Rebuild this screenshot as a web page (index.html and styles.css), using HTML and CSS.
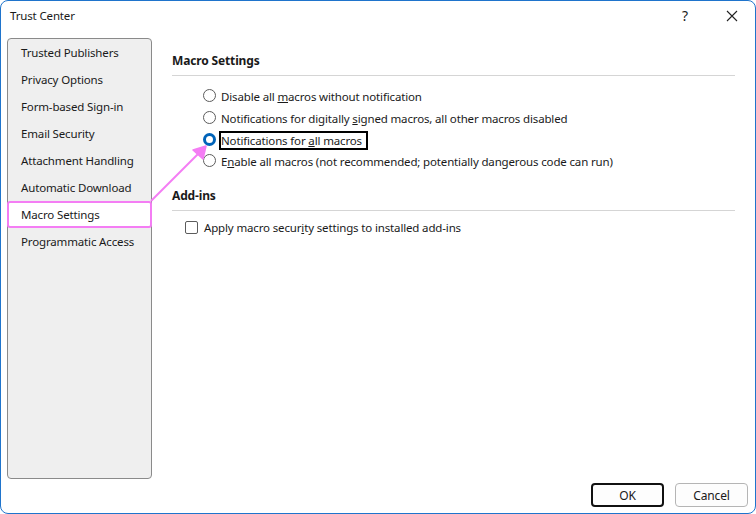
FILE: index.html
```html
<!DOCTYPE html>
<html lang="en">
<head>
    <meta charset="UTF-8">
    <title>Trust Center</title>
    <link rel="stylesheet" href="styles.css">
</head>
<body>

    <div class="window">
        <div class="title-bar">
            <span class="title">Trust Center</span>
            <span class="title-btn help">?</span>
            <span class="title-btn close">
                <svg width="12" height="12" viewBox="0 0 12 12"><path d="M1 1 L11 11 M11 1 L1 11" stroke="#222" stroke-width="1.1" fill="none"/></svg>
            </span>
        </div>

        <div class="main">
            <ul class="sidebar">
                <li>Trusted Publishers</li>
                <li>Privacy Options</li>
                <li>Form-based Sign-in</li>
                <li>Email Security</li>
                <li>Attachment Handling</li>
                <li>Automatic Download</li>
                <li class="active">Macro Settings</li>
                <li>Programmatic Access</li>
            </ul>

            <div class="content">
                <h2 class="section-title">Macro Settings</h2>
                <div class="options">
                    <div class="option"><span class="radio"></span><span>Disable all <u>m</u>acros without notification</span></div>
                    <div class="option"><span class="radio"></span><span>Notifications for digitally <u>s</u>igned macros, all other macros disabled</span></div>
                    <div class="option"><span class="radio checked"></span><span class="focus">Notifications for <u>a</u>ll macros</span></div>
                    <div class="option"><span class="radio"></span><span>E<u>n</u>able all macros (not recommended; potentially dangerous code can run)</span></div>
                </div>

                <h2 class="section-title">Add-ins</h2>
                <div class="check-row"><span class="checkbox"></span><span>Apply macro secur<u>i</u>ty settings to installed add-ins</span></div>
            </div>
        </div>

        <div class="footer">
            <button class="btn default">OK</button>
            <button class="btn">Cancel</button>
        </div>

        <!-- callout arrow -->
        <svg class="callout" width="756" height="514" viewBox="0 0 756 514">
            <path d="M151 201 L205 147" stroke="#f47df4" stroke-width="2" fill="none"/>
            <path d="M193 150 L206 146 L203 159 Z" fill="#f47df4" stroke="#f47df4" stroke-width="1.5" stroke-linejoin="round"/>
        </svg>
    </div>

</body>
</html>
```

FILE: styles.css
```css
* {
    margin: 0;
    padding: 0;
    box-sizing: border-box;
}

body {
    font-family: 'Noto Sans', 'Open Sans', sans-serif;
    font-size: 11.5px;
    letter-spacing: -0.15px;
    color: #1a1a1a;
    background: #fff;
}

.window {
    position: relative;
    width: 756px;
    height: 514px;
    border: 1px solid #1f74cc;
    border-radius: 8px;
    background: #fff;
    display: flex;
    flex-direction: column;
    overflow: hidden;
}

.title-bar {
    height: 31px;
    display: flex;
    align-items: center;
    padding-left: 9px;
}

.title {
    flex: 1;
    margin-top: -2px;
}

.title-btn {
    width: 46px;
    display: flex;
    justify-content: center;
    align-items: center;
    font-size: 14px;
    margin-top: -2px;
}

.title-btn.help {
    margin-right: 1px;
}

.main {
    display: flex;
    padding: 6px 0 0 6px;
    height: 448px;
}

/* Left menu */
.sidebar {
    list-style: none;
    width: 145px;
    height: 441px;
    background: #efefef;
    border: 1px solid #8a8a8a;
    border-radius: 4px;
}

.sidebar li {
    height: 27px;
    line-height: 28px;
    padding-left: 13px;
    white-space: nowrap;
}

.sidebar li.active {
    background: #fff;
    border: 2px solid #f47df4;
    border-radius: 3px;
    margin: 0 -1px;
    padding-left: 12px;
    line-height: 24px;
}

/* Right pane */
.content {
    flex: 1;
    padding: 14px 20px 0 20px;
}

.section-title {
    font-size: 12px;
    font-weight: bold;
    padding-bottom: 6px;
    border-bottom: 1px solid #d5d5d5;
}

.options {
    padding: 10px 0 14px 31px;
}

.option {
    display: flex;
    align-items: center;
    height: 21.7px;
}

.radio {
    width: 13px;
    height: 13px;
    border: 1px solid #5c5c5c;
    border-radius: 50%;
    background: #fff;
    margin-right: 5px;
    margin-top: -2px;
}

.radio.checked {
    border: 3.5px solid #0063b9;
}

.focus {
    border: 2px solid #000;
    padding: 0 4px 0 0;
    line-height: 15px;
    margin-left: -2px;
}

.check-row {
    display: flex;
    align-items: center;
    padding: 9px 0 0 13px;
}

.checkbox {
    width: 13px;
    height: 13px;
    border: 1px solid #5c5c5c;
    border-radius: 2px;
    margin-right: 6px;
}

/* Bottom buttons */
.footer {
    display: flex;
    justify-content: flex-end;
    gap: 11px;
    padding: 3px 7px 0 0;
}

.btn {
    width: 73px;
    height: 24px;
    font-family: inherit;
    font-size: 12px;
    letter-spacing: inherit;
    color: #1a1a1a;
    background: #fdfdfd;
    border: 1px solid #b5b5b5;
    border-radius: 4px;
}

.btn.default {
    border: 2px solid #111;
}

.callout {
    position: absolute;
    left: -1px;
    top: -1px;
    pointer-events: none;
}
```
